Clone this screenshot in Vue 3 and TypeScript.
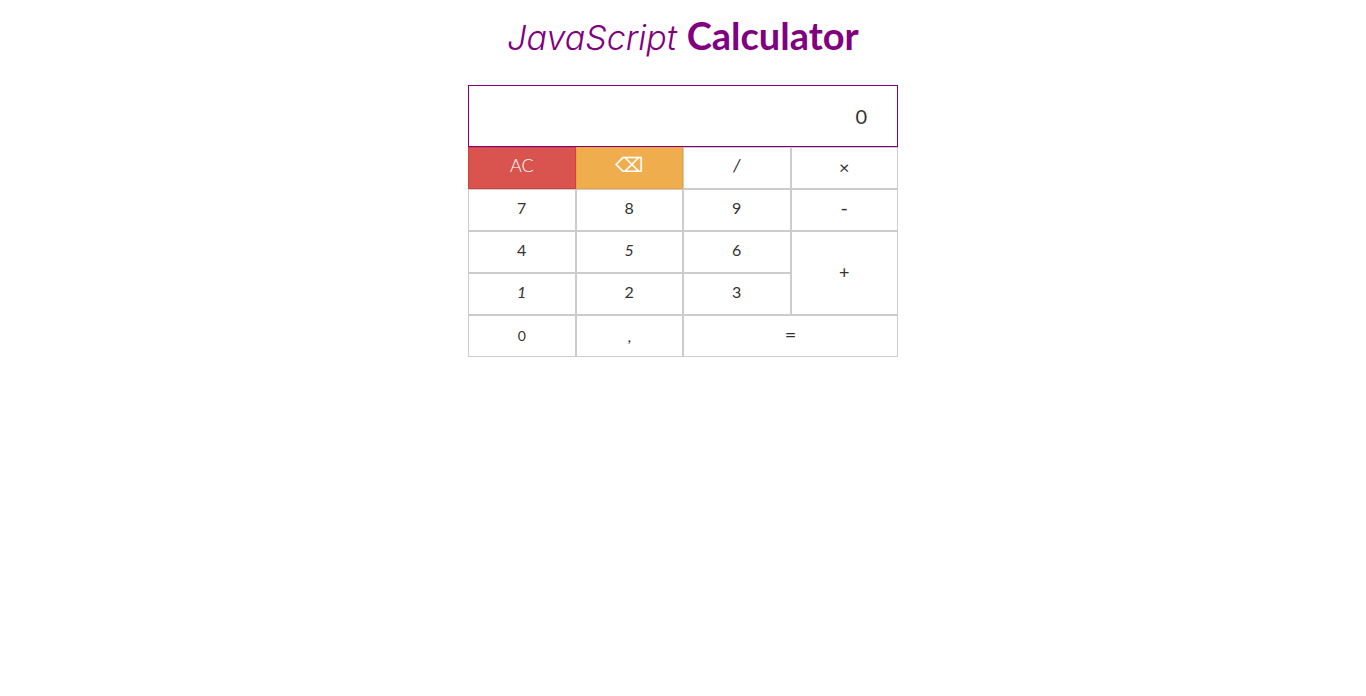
<script setup lang="ts">
import { ref } from 'vue'

interface Key {
  label: string
  name: string
  kind?: string
}

const keys: Key[] = [
  { label: 'AC', name: 'All clear', kind: 'clear' },
  { label: '⌫', name: 'Backspace', kind: 'erase' },
  { label: '/', name: 'Divide', kind: 'slash' },
  { label: '×', name: 'Multiply', kind: 'times' },
  { label: '7', name: '7' },
  { label: '8', name: '8' },
  { label: '9', name: '9' },
  { label: '-', name: 'Subtract', kind: 'minus' },
  { label: '4', name: '4' },
  { label: '5', name: '5', kind: 'slanted' },
  { label: '6', name: '6' },
  { label: '+', name: 'Add', kind: 'plus' },
  { label: '1', name: '1', kind: 'slanted' },
  { label: '2', name: '2' },
  { label: '3', name: '3' },
  { label: '0', name: '0', kind: 'zero' },
  { label: ',', name: 'Decimal comma', kind: 'comma' },
  { label: '=', name: 'Equals', kind: 'equals' },
]

const display = ref('0')
const stored = ref<number | null>(null)
const operator = ref('')
const fresh = ref(true)

function current(): number {
  return Number(display.value.replace(',', '.'))
}

function resolve(): void {
  if (stored.value === null || !operator.value) return
  const a = stored.value
  const b = current()
  const result =
    operator.value === '+' ? a + b : operator.value === '-' ? a - b : operator.value === '×' ? a * b : a / b
  display.value = String(Number(result.toPrecision(12))).replace('.', ',')
}

function press(label: string): void {
  if (/^\d$/.test(label)) {
    display.value = fresh.value || display.value === '0' ? label : display.value + label
    fresh.value = false
  } else if (label === ',') {
    if (fresh.value) display.value = '0,'
    else if (!display.value.includes(',')) display.value += ','
    fresh.value = false
  } else if (label === 'AC') {
    display.value = '0'
    stored.value = null
    operator.value = ''
    fresh.value = true
  } else if (label === '⌫') {
    display.value = display.value.slice(0, -1) || '0'
  } else if (label === '=') {
    resolve()
    stored.value = null
    operator.value = ''
    fresh.value = true
  } else {
    if (!fresh.value) resolve()
    stored.value = current()
    operator.value = label
    fresh.value = true
  }
}
</script>

<template>
  <main class="page">
    <h1 class="title"><em>JavaScript</em> <strong>Calculator</strong></h1>
    <section class="calculator">
      <input class="display" type="text" :value="display" aria-label="Result" readonly />
      <div class="keys">
        <button
          v-for="key in keys"
          :key="key.label"
          type="button"
          class="key"
          :class="key.kind"
          :aria-label="key.name"
          @click="press(key.label)"
        >
          {{ key.label }}
        </button>
      </div>
    </section>
  </main>
</template>

<style>
body {
  margin: 0;
  background: #fff;
}
</style>

<style scoped>
.page {
  display: flex;
  flex-direction: column;
  align-items: center;
  gap: 26px;
  padding: 12px 16px;
  color: #333;
  font-family: Lato, "Open Sans", sans-serif;
}

.title {
  margin: 0;
  color: #800080;
  font-size: 38px;
  font-weight: 400;
  line-height: 47px;
  text-align: center;
}

.title em {
  font-family: Inter, "Open Sans", sans-serif;
  font-size: 34px;
  font-weight: 300;
  line-height: 36px;
}

.title strong {
  font-weight: 700;
}

.calculator {
  width: 100%;
  max-width: 430px;
}

.display {
  display: block;
  box-sizing: border-box;
  width: 100%;
  height: 62px;
  margin: 0;
  padding: 0 30px;
  border: 1px solid #800080;
  border-radius: 0;
  outline: none;
  background: #fff;
  color: #333;
  font-family: inherit;
  font-size: 20px;
  text-align: right;
}

.keys {
  display: grid;
  grid-template-columns: repeat(4, 1fr);
  grid-auto-rows: 42px;
}

.key {
  margin: 0;
  padding: 0 12px 4px;
  border: 1px solid #ccc;
  border-radius: 0;
  background: #fff;
  color: #333;
  font-family: inherit;
  font-size: 16px;
  line-height: 24px;
  cursor: pointer;
}

.clear {
  padding-bottom: 6px;
  border-color: #d43f3a;
  background: #d9534f;
  color: #fff;
  font-size: 18px;
  font-weight: 300;
}

.erase {
  padding-bottom: 6px;
  border-color: #eea236;
  background: #f0ad4e;
  color: #fff;
  font-family: "DejaVu Sans", sans-serif;
  font-size: 20px;
}

.slash {
  padding-bottom: 6px;
  font-size: 18px;
  font-style: italic;
}

.slanted {
  font-style: italic;
}

.minus {
  padding-bottom: 6px;
  font-size: 20px;
}

.times {
  padding-bottom: 2px;
  font-size: 18px;
}

.plus {
  grid-row: span 2;
  padding-bottom: 2px;
  font-size: 18px;
}

.zero {
  padding-bottom: 0;
  font-size: 14px;
}

.comma {
  padding-bottom: 0;
}

.equals {
  grid-column: span 2;
  font-size: 20px;
}
</style>
